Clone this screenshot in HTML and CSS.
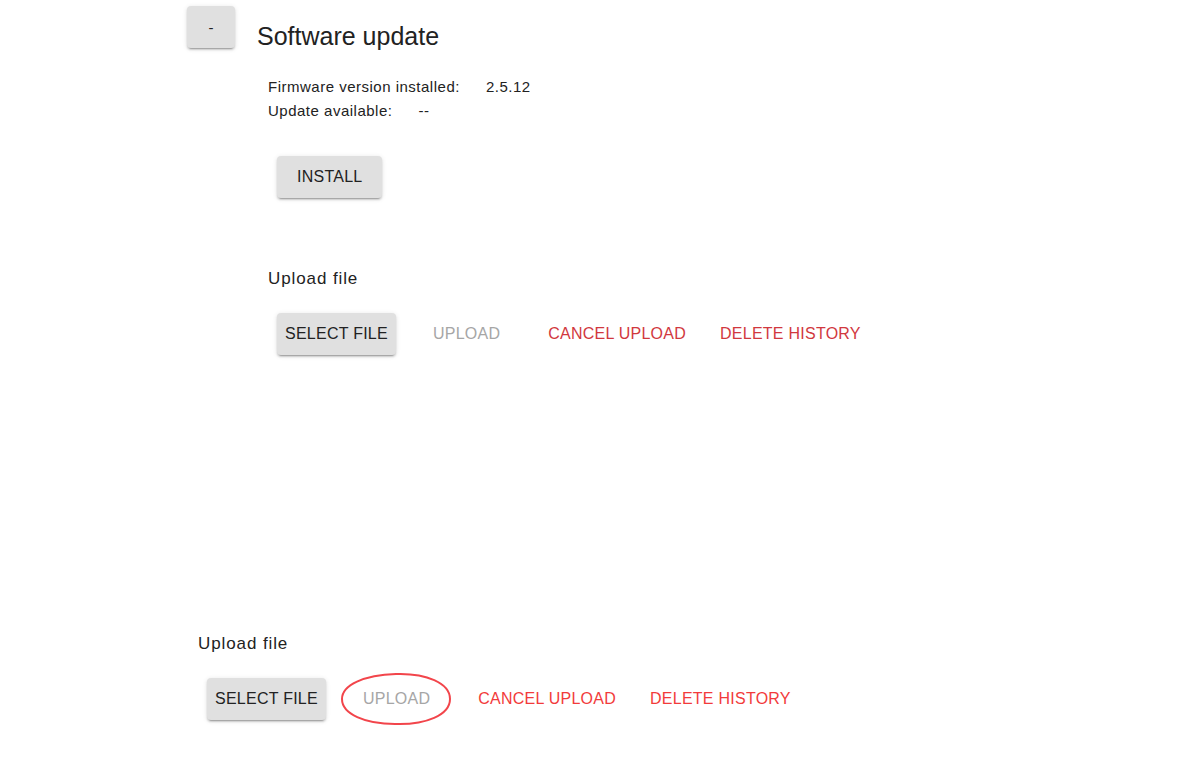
FILE: index.html
```html
<!DOCTYPE html>
<html lang="en">
<head>
  <meta charset="UTF-8">
  <meta name="viewport" content="width=device-width, initial-scale=1.0">
  <title>Software update</title>
  <link rel="stylesheet" href="styles.css">
</head>
<body>
  <div class="header">
    <button class="btn toggle-btn">-</button>
    <h2 class="title">Software update</h2>
  </div>

  <div class="panel">
    <div class="info">
      <div>Firmware version installed:<span class="value">2.5.12</span></div>
      <div>Update available:<span class="value">--</span></div>
    </div>

    <div class="install-wrap">
      <button class="btn install-btn">Install</button>
    </div>

    <div class="upload">
      <div class="upload-label">Upload file</div>
      <div class="upload-row">
        <button class="btn select-btn">Select file</button>
        <button class="text-btn upload-btn" disabled>Upload</button>
        <button class="text-btn danger cancel-btn">Cancel upload</button>
        <button class="text-btn danger delete-btn">Delete history</button>
      </div>
    </div>
  </div>

  <!-- same upload block, with the disabled button marked -->
  <div class="upload upload-bottom">
    <div class="upload-label">Upload file</div>
    <div class="upload-row">
      <button class="btn select-btn">Select file</button>
      <span class="marked">
        <button class="text-btn upload-btn" disabled>Upload</button>
        <svg class="mark" width="112" height="56" viewBox="0 0 112 56">
          <path d="M56 3 C86 2 110 12 110 28 C110 44 86 54 55 53 C25 53 2 43 2 28 C2 14 24 4 56 3 Z" fill="none" stroke="#f2454b" stroke-width="2"/>
        </svg>
      </span>
      <button class="text-btn danger bright cancel-btn">Cancel upload</button>
      <button class="text-btn danger bright delete-btn">Delete history</button>
    </div>
  </div>
</body>
</html>
```

FILE: styles.css
```css
* {
  box-sizing: border-box;
}

body {
  margin: 0;
  padding-bottom: 48px;
  font-family: 'Liberation Sans', Arial, sans-serif;
  color: #222;
  background: #fff;
}

.header {
  display: flex;
  align-items: flex-end;
  gap: 22px;
  margin-left: 187px;
  padding-top: 6px;
}

.title {
  margin: 0 0 -3px 0;
  font-size: 25px;
  line-height: 29px;
  font-weight: normal;
  color: #222;
}

.btn {
  display: inline-flex;
  align-items: center;
  justify-content: center;
  height: 42px;
  border: none;
  border-radius: 4px;
  background-color: #e0e0e0;
  color: #222;
  font-family: 'Liberation Sans', Arial, sans-serif;
  font-size: 16px;
  letter-spacing: 0.25px;
  text-transform: uppercase;
  box-shadow: 0 3px 1px -2px rgba(0, 0, 0, 0.2), 0 2px 2px 0 rgba(0, 0, 0, 0.14), 0 1px 5px 0 rgba(0, 0, 0, 0.12);
  cursor: pointer;
}

.toggle-btn {
  width: 48px;
  padding: 0;
  font-size: 15px;
}

.panel {
  margin-left: 268px;
  margin-top: 27px;
}

.info {
  font-size: 15px;
  line-height: 24px;
  letter-spacing: 0.5px;
}

.value {
  margin-left: 26px;
}

.install-wrap {
  margin-top: 33px;
  padding-left: 9px;
}

.install-btn {
  padding: 0 20px;
}

.upload {
  margin-top: 69px;
}

.upload-label {
  font-size: 17px;
  line-height: 24px;
  letter-spacing: 0.9px;
}

.upload-row {
  display: flex;
  align-items: center;
  margin-top: 22px;
  padding-left: 9px;
}

.select-btn {
  padding: 0 8px;
}

.text-btn {
  height: 42px;
  padding: 0 8px;
  border: none;
  background: none;
  font-family: 'Liberation Sans', Arial, sans-serif;
  font-size: 16px;
  letter-spacing: 0.25px;
  text-transform: uppercase;
  cursor: pointer;
}

.upload-btn {
  margin-left: 29px;
  color: #a6a6a6;
}

.cancel-btn {
  margin-left: 32px;
}

.delete-btn {
  margin-left: 18px;
}

.danger {
  color: #d1383e;
}

.danger.bright {
  color: #f23b3b;
}

.upload-bottom {
  margin-left: 198px;
  margin-top: 277px;
}

.marked {
  position: relative;
  display: inline-flex;
}

.mark {
  position: absolute;
  left: 14px;
  top: -7px;
  pointer-events: none;
}
```
